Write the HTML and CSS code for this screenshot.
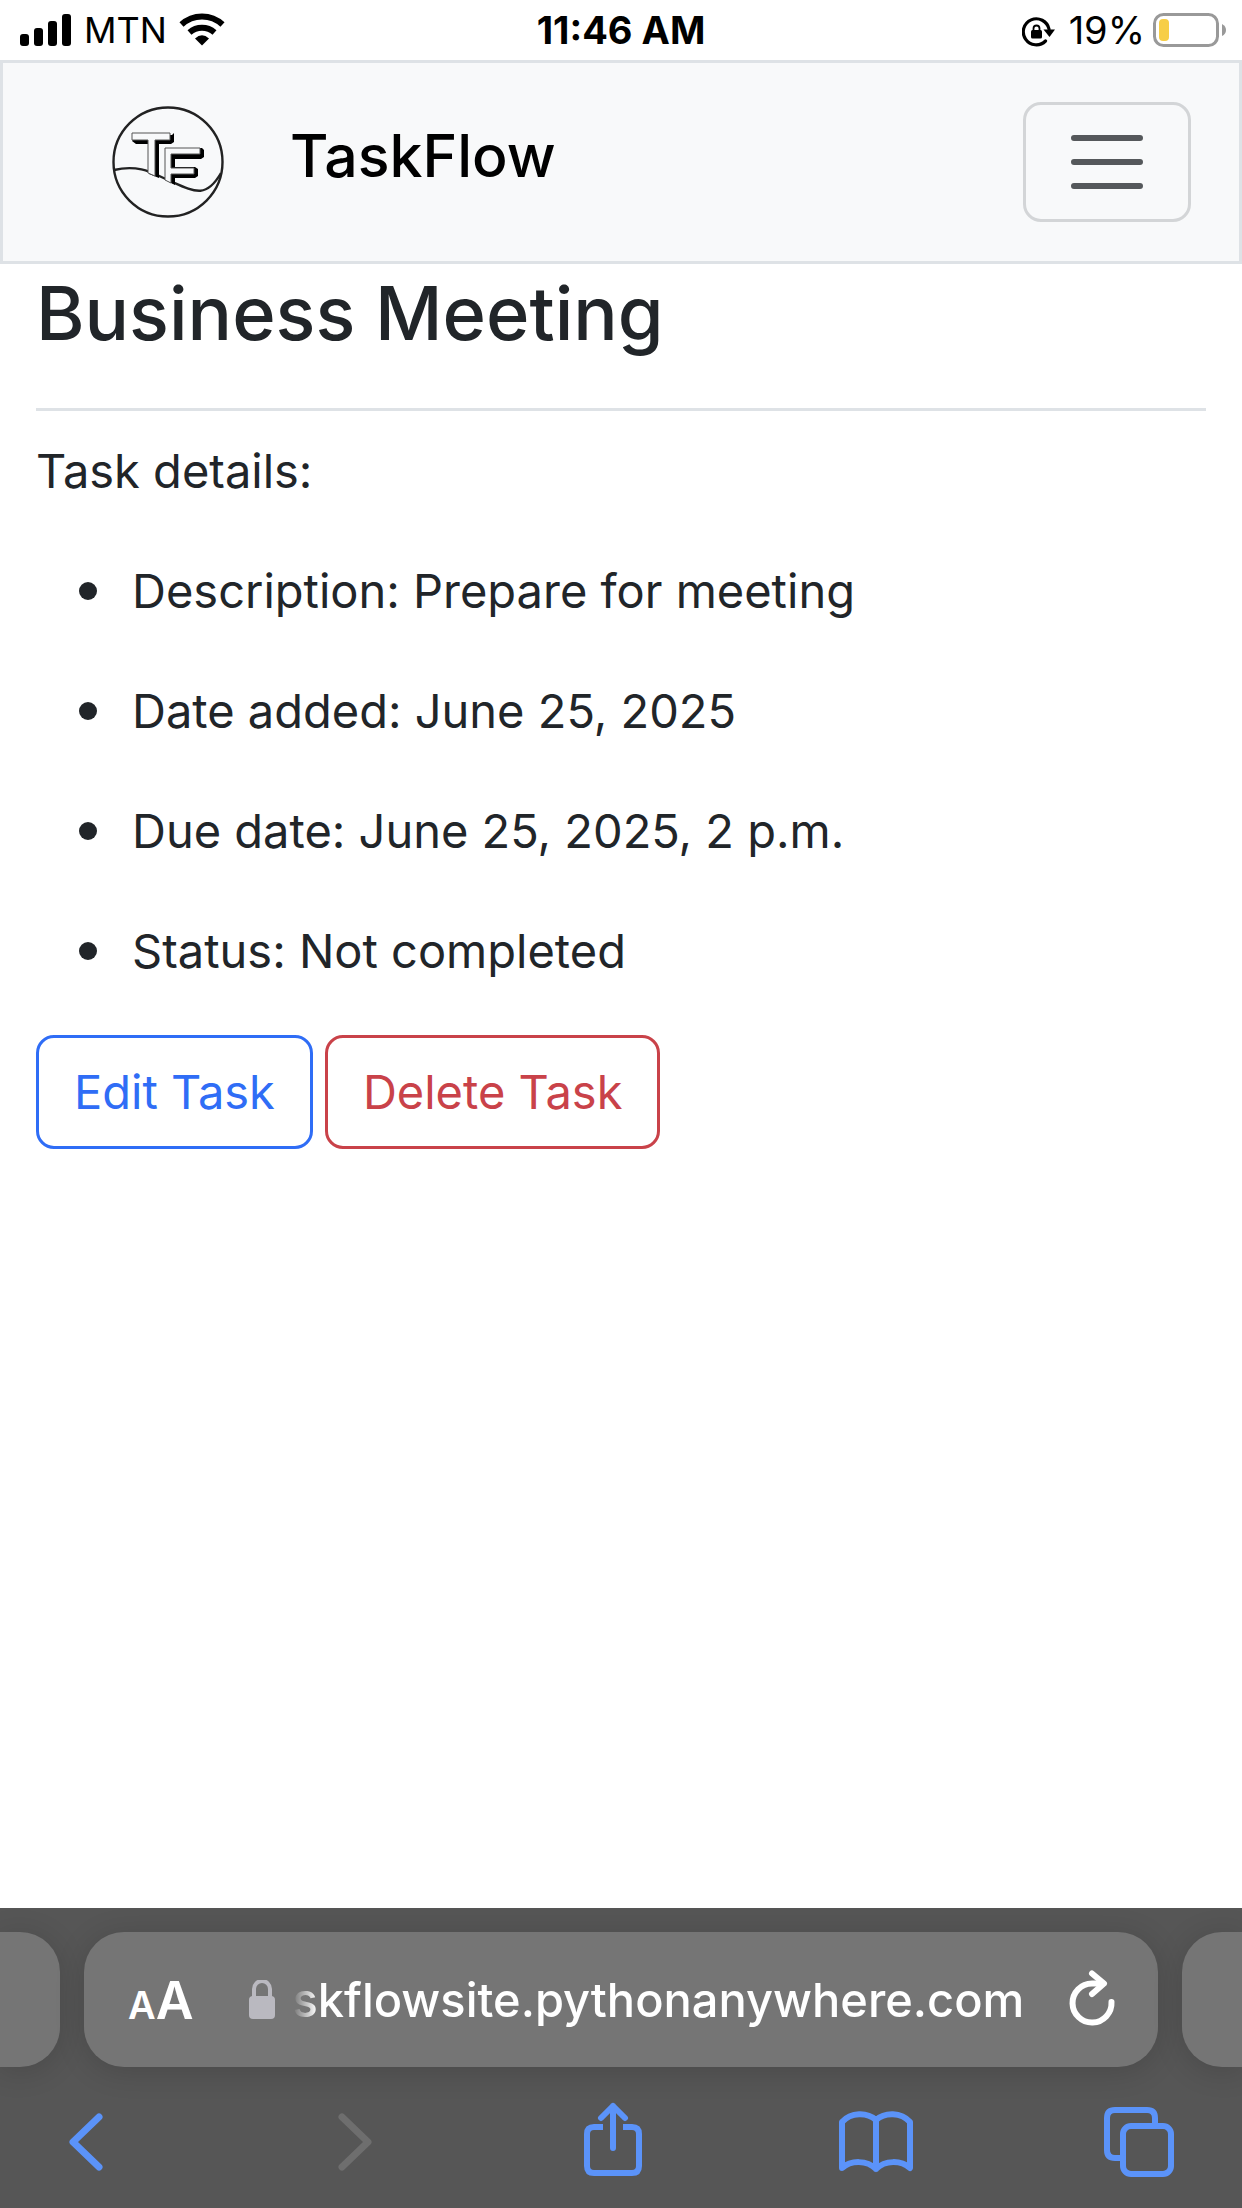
FILE: index.html
```html
<!DOCTYPE html>
<html lang="en">
<head>
<meta charset="utf-8">
<meta name="viewport" content="width=device-width, initial-scale=1">
<title>Business Meeting - TaskFlow</title>
<link rel="stylesheet" href="styles.css">
</head>
<body>
<header class="status">
  <div class="status-side">
    <svg width="52" height="34" viewBox="0 0 52 34" aria-hidden="true"><rect x="0" y="21" width="9" height="12" rx="3"/><rect x="14" y="15" width="9" height="18" rx="3"/><rect x="28" y="8" width="9" height="25" rx="3"/><rect x="42" y="1" width="9" height="32" rx="3"/></svg>
    <span class="carrier">MTN</span>
    <svg width="46" height="34" viewBox="0 0 46 34" aria-hidden="true"><g fill="none" stroke="#000" stroke-width="6"><path d="M2.500 11.500A30 30 0 0 1 43.500 11.500"/><path d="M10.500 19.500A19 19 0 0 1 35.500 19.500"/></g><path d="M16 25.500Q23 19 30 25.500L23 32.500Z"/></svg>
  </div>
  <time class="clock">11:46 AM</time>
  <div class="status-side status-right">
    <svg class="rotation-lock" width="33" height="34" viewBox="0 0 33 34" aria-hidden="true"><path d="M27 16A13 13 0 1 0 23.500 28" fill="none" stroke="#000" stroke-width="3.200" stroke-linecap="round"/><path d="M21.500 16.500H33L27.500 24Z"/><rect x="9" y="17" width="11" height="8.500" rx="1.500"/><path d="M11.500 18V15.500a3 3 0 0 1 6 0V18" fill="none" stroke="#000" stroke-width="1.800"/></svg>
    <span class="percent">19%</span>
    <svg width="74" height="34" viewBox="0 0 74 34" aria-hidden="true"><rect x="1.500" y="1.500" width="63" height="31" rx="9" fill="none" stroke="#999" stroke-width="3"/><rect x="6" y="6" width="10" height="22" rx="4" fill="#f7ce46"/><path d="M69 11q4 2 4 6t-4 6z" fill="#999"/></svg>
  </div>
</header>
<nav class="navbar">
  <a class="brand" href="#">
    <svg width="112" height="112" viewBox="0 0 112 112" aria-hidden="true">
      <g fill="none" stroke="#222" stroke-width="2.400"><circle cx="56" cy="56" r="54.500"/><path d="M2 64C28 58 42 68 56 74C83 86 94 93 109 67"/></g>
      <path d="M24 29H60L62 27V36L59 38H47V72L37 68V38H24L20 35ZM57 42H90L92 44V51L89 53H63V61H83L86 63V70L83 72H63V79L57 76Z"/>
      <path d="M20 27H58V34H43V70L36 67V34H20ZM53 42H88V48H59V62H82V68H59V77L53 74Z" fill="#f8f9fa" stroke="#555" stroke-width="1"/>
    </svg>
    <span class="brand-name">TaskFlow</span>
  </a>
  <button class="toggler" type="button" aria-label="Toggle navigation"><svg width="90" height="90" viewBox="0 0 30 30" aria-hidden="true"><path stroke="#55585b" stroke-linecap="round" stroke-width="2" d="M4 7h22M4 15h22M4 23h22"/></svg></button>
</nav>
<main class="content">
  <h1>Business Meeting</h1>
  <hr>
  <p>Task details:</p>
  <ul>
    <li>Description: Prepare for meeting</li>
    <li>Date added: June 25, 2025</li>
    <li>Due date: June 25, 2025, 2 p.m.</li>
    <li>Status: Not completed</li>
  </ul>
  <div class="actions">
    <a class="btn btn-edit" href="#">Edit Task</a>
    <a class="btn btn-delete" href="#">Delete Task</a>
  </div>
</main>
<footer class="browser">
  <div class="tabs">
    <div class="tab tab-prev"></div>
    <div class="tab tab-current">
      <button class="text-size" type="button" aria-label="Page settings"><span class="small-a">A</span><span>A</span></button>
      <svg class="lock" width="26" height="40" viewBox="0 0 26 40" aria-hidden="true"><rect x="0" y="16" width="26" height="23" rx="4" fill="#bab9c0"/><path d="M5 18V9a8 8 0 0 1 16 0v9" fill="none" stroke="#bab9c0" stroke-width="4"/></svg>
      <span class="url">skflowsite.pythonanywhere.com</span>
      <button class="reload" type="button" aria-label="Reload"><svg width="46" height="62" viewBox="0 0 46 62" aria-hidden="true"><g fill="none" stroke="#fff" stroke-width="6" stroke-linecap="round" stroke-linejoin="round"><path d="M32 14.500H23A19.500 19.500 0 1 0 42.500 33"/><path d="M23 4.500L35 14.500L23 25"/></g></svg></button>
    </div>
    <div class="tab tab-next"></div>
  </div>
  <div class="toolbar">
    <button type="button" aria-label="Back"><svg width="34" height="58" viewBox="0 0 34 58"><path class="chevron" d="M30 4L4 29L30 54"/></svg></button>
    <button type="button" aria-label="Forward" disabled><svg width="46" height="58" viewBox="0 0 46 58"><path class="chevron" d="M16 4L42 29L16 54"/></svg></button>
    <button type="button" aria-label="Share"><svg width="58" height="80" viewBox="0 0 58 80"><path class="share-box" d="M19 25H10Q3 25 3 32V64Q3 71 10 71H48Q55 71 55 64V32Q55 25 48 25H39"/><path d="M29 46V4M17 16L29 4L41 16"/></svg></button>
    <button type="button" aria-label="Bookmarks"><svg width="74" height="64" viewBox="0 0 74 64"><path d="M37 10V59M37 10C28 2 12 2 3 12V58C12 50 28 50 37 59C46 50 62 50 71 58V12C62 2 46 2 37 10Z"/></svg></button>
    <button type="button" aria-label="Tabs"><svg width="70" height="70" viewBox="0 0 70 70"><rect x="19" y="19" width="48" height="48" rx="8"/><path d="M19 51H11Q3 51 3 43V11Q3 3 11 3H43Q51 3 51 11V19"/></svg></button>
  </div>
</footer>
</body>
</html>
```
FILE: styles.css
```css
* { box-sizing: border-box; }
body {
  margin: 0;
  min-height: 100vh;
  display: flex;
  flex-direction: column;
  font-family: Inter, sans-serif;
  font-size: 47px;
  line-height: 72px;
  color: #212529;
  background: #fff;
}
svg { display: block; flex: none; }
button { margin: 0; padding: 0; border: 0; background: none; font: inherit; color: inherit; }
a { text-decoration: none; color: inherit; }

.status {
  display: grid;
  grid-template-columns: 1fr auto 1fr;
  align-items: center;
  height: 60px;
  font-size: 38px;
  line-height: 60px;
  color: #000;
}
.status-side { display: flex; align-items: center; gap: 12px; padding-left: 20px; }
.status-right { justify-content: flex-end; gap: 8px; padding: 0 15px 0 0; }
.carrier { font-size: 36px; }
.rotation-lock { margin-right: 6px; }
.clock { font-weight: 700; }

.navbar {
  display: flex;
  align-items: center;
  justify-content: space-between;
  height: 204px;
  padding: 0 48px 0 109px;
  border: 3px solid #dee2e6;
  background: #f8f9fa;
}
.brand { display: flex; align-items: center; gap: 66px; font-size: 59px; font-weight: 500; color: #000; }
.brand-name { padding-bottom: 12px; }
.toggler {
  display: flex;
  align-items: center;
  justify-content: center;
  width: 168px;
  height: 120px;
  border: 3px solid #d3d5d7;
  border-radius: 18px;
}

.content { flex: 1; padding: 0 36px; }
h1 { margin: 4px 0 50px; font-size: 74px; line-height: 90px; font-weight: 500; }
hr { margin: 0 0 24px; border: 0; border-top: 3px solid #dee2e6; }
p { margin: 0 0 48px; }
ul { margin: 0 0 48px; padding-left: 43px; list-style: none; }
li { display: flex; align-items: center; gap: 35px; margin-bottom: 48px; }
li::before { content: ""; flex: none; width: 18px; height: 18px; border-radius: 50%; background: #212529; }
.actions { display: flex; gap: 12px; }
.btn { padding: 18px 35px; border: 3px solid; border-radius: 18px; }
.btn-edit { color: #2f6df6; }
.btn-delete { color: #c94249; }

.browser { height: 300px; background: #565656; color: #fff; overflow: hidden; }
.tabs { display: flex; gap: 24px; padding-top: 24px; }
.tab { height: 135px; border-radius: 40px; background: #757575; box-shadow: 0 4px 30px rgba(0, 0, 0, 0.15); }
.tab-prev { width: 60px; border-radius: 0 40px 40px 0; }
.tab-next { width: 60px; border-radius: 40px 0 0 40px; }
.tab-current { flex: 1; display: flex; align-items: center; padding: 0 43px 0 44px; }
.text-size { display: flex; align-items: baseline; padding-top: 6px; font-size: 52px; font-weight: 600; }
.small-a { font-size: 38px; }
.lock { margin-left: 55px; }
.url {
  margin-left: 18px;
  font-weight: 500;
  -webkit-mask-image: linear-gradient(90deg, transparent, #000 24px);
  mask-image: linear-gradient(90deg, transparent, #000 24px);
}
.reload { margin-left: auto; }
.toolbar { display: flex; align-items: center; justify-content: space-between; height: 141px; padding: 8px 66px 0 49px; }
.toolbar button { display: flex; justify-content: center; width: 74px; }
.toolbar svg { fill: none; stroke: #5b93f9; stroke-width: 6; stroke-linecap: round; stroke-linejoin: round; }
.toolbar .chevron { stroke-width: 7; }
.toolbar .share-box { stroke-linecap: butt; }
.toolbar button:disabled svg { stroke: #6e6e6e; }
```
